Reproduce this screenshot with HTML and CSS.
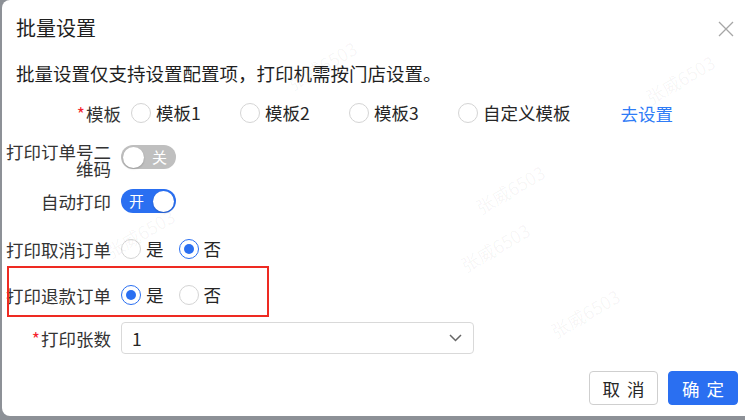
FILE: index.html
```html
<!DOCTYPE html>
<html lang="zh-CN">
<head>
    <meta charset="UTF-8">
    <meta name="viewport" content="width=device-width, initial-scale=1.0">
    <title>批量设置</title>
    <link rel="stylesheet" href="styles.css">
</head>
<body>
    <div class="dialog">
        <div class="dialog-header">
            <span class="dialog-title">批量设置</span>
            <span class="dialog-close">
                <svg width="16" height="16" viewBox="0 0 16 16"><path d="M1 1 L15 15 M15 1 L1 15" stroke="#a6a6a6" stroke-width="1.3" fill="none"/></svg>
            </span>
        </div>
        <p class="dialog-tip">批量设置仅支持设置配置项，打印机需按门店设置。</p>

        <form class="form">
            <div class="form-row row-template">
                <label class="form-label form-label-wide"><span class="required">*</span>模板</label>
                <div class="form-control">
                    <label class="radio tpl-option"><span class="radio-dot"></span>模板1</label>
                    <label class="radio tpl-option"><span class="radio-dot"></span>模板2</label>
                    <label class="radio tpl-option"><span class="radio-dot"></span>模板3</label>
                    <label class="radio"><span class="radio-dot"></span>自定义模板</label>
                    <a class="link" href="#">去设置</a>
                </div>
            </div>
            <div class="form-row row-qrcode">
                <label class="form-label">打印订单号二维码</label>
                <div class="form-control">
                    <span class="switch"><span class="switch-knob"></span><span class="switch-text">关</span></span>
                </div>
            </div>
            <div class="form-row row-auto">
                <label class="form-label">自动打印</label>
                <div class="form-control">
                    <span class="switch switch-on"><span class="switch-text">开</span><span class="switch-knob"></span></span>
                </div>
            </div>
            <div class="form-row row-cancel">
                <label class="form-label">打印取消订单</label>
                <div class="form-control">
                    <label class="radio yn-option"><span class="radio-dot"></span>是</label>
                    <label class="radio yn-option"><span class="radio-dot checked"></span>否</label>
                </div>
            </div>
            <div class="form-row row-refund">
                <label class="form-label">打印退款订单</label>
                <div class="form-control">
                    <label class="radio yn-option"><span class="radio-dot checked"></span>是</label>
                    <label class="radio yn-option"><span class="radio-dot"></span>否</label>
                </div>
            </div>
            <div class="form-row row-copies">
                <label class="form-label"><span class="required">*</span>打印张数</label>
                <div class="form-control">
                    <div class="select">
                        <span>1</span>
                        <svg width="13" height="8" viewBox="0 0 13 8"><path d="M1 1 L6.5 6.5 L12 1" stroke="#666" stroke-width="1.5" fill="none"/></svg>
                    </div>
                </div>
            </div>
        </form>

        <div class="dialog-footer">
            <button type="button" class="btn">取消</button>
            <button type="button" class="btn btn-primary">确定</button>
        </div>

        <div class="highlight-box"></div>

        <span class="watermark wm-1">张威6503</span>
        <span class="watermark wm-2">张威6503</span>
        <span class="watermark wm-3">张威6503</span>
        <span class="watermark wm-4">张威6503</span>
        <span class="watermark wm-5">张威6503</span>
        <span class="watermark wm-6">张威6503</span>
    </div>
</body>
</html>
```

FILE: styles.css
```css
body {
    margin: 0;
    padding: 0;
    background-color: #8d9197;
    font-family: "Noto Sans CJK SC", "Noto Sans", sans-serif;
    color: #262626;
    overflow: hidden;
}
.dialog {
    position: relative;
    margin-left: 2px;
    height: 416px;
    background-color: #fff;
    border-radius: 8px 0 0 8px;
    overflow: hidden;
}
.dialog-header {
    display: flex;
    justify-content: space-between;
    align-items: center;
    padding: 14px 11px 0 14px;
}
.dialog-title {
    font-size: 20px;
    line-height: 28px;
    color: #1f1f1f;
}
.dialog-close {
    display: flex;
    margin-top: 1px;
}
.dialog-tip {
    margin: 19px 0 0 14px;
    font-size: 18.5px;
    line-height: 24px;
    color: #1f1f1f;
}
.form {
    margin-top: 12px;
    padding-left: 4px;
}
.form-row {
    display: flex;
    align-items: center;
    height: 32px;
    font-size: 17.5px;
}
.row-qrcode {
    align-items: flex-start;
    height: 34px;
    margin-top: 14px;
}
.row-auto { margin-top: 8px; }
.row-cancel { margin-top: 16px; }
.row-refund { margin-top: 14px; }
.row-copies { margin-top: 11px; }

.form-label {
    width: 105px;
    flex-shrink: 0;
    text-align: right;
    line-height: 17px;
    color: #333;
}
.form-label-wide {
    width: 115px;
}
.required {
    color: #f5222d;
    margin-right: 1px;
}
.form-control {
    display: flex;
    align-items: center;
    margin-left: 10px;
}
.row-qrcode .form-control {
    margin-top: 2px;
}
.radio {
    display: flex;
    align-items: center;
    color: #262626;
    line-height: 24px;
}
.radio-dot {
    width: 20px;
    height: 20px;
    box-sizing: border-box;
    border: 1px solid #d4d4d4;
    border-radius: 50%;
    margin-right: 5px;
    position: relative;
}
.radio-dot.checked {
    border-color: #2a6ff1;
}
.radio-dot.checked::after {
    content: "";
    position: absolute;
    left: 4px;
    top: 4px;
    width: 10px;
    height: 10px;
    border-radius: 50%;
    background-color: #2a6ff1;
}
.tpl-option {
    width: 109px;
}
.yn-option {
    margin-right: 15px;
}
.link {
    margin-left: 50px;
    color: #2f7cf6;
    text-decoration: none;
}
.switch {
    display: flex;
    align-items: center;
    justify-content: space-between;
    width: 55px;
    height: 24px;
    box-sizing: border-box;
    padding: 0 9px 0 2px;
    border-radius: 12px;
    background-color: #bfbfbf;
}
.switch-on {
    background-color: #2a6ff1;
    padding: 0 2px 0 8px;
}
.switch-knob {
    width: 21px;
    height: 21px;
    border-radius: 50%;
    background-color: #fff;
    box-shadow: 0 1px 2px rgba(0,0,0,0.2);
}
.switch-text {
    color: #fff;
    font-size: 15px;
    line-height: 24px;
}
.select {
    display: flex;
    align-items: center;
    justify-content: space-between;
    width: 353px;
    height: 32px;
    box-sizing: border-box;
    padding: 0 11px 0 10px;
    border: 1px solid #d9d9d9;
    border-radius: 4px;
    color: #262626;
}
.dialog-footer {
    display: flex;
    justify-content: flex-end;
    gap: 10px;
    margin-top: 17px;
    padding-right: 7px;
}
.btn {
    width: 69px;
    height: 34px;
    padding: 0 0 0 7px;
    border: 1px solid #cfcfcf;
    border-radius: 4px;
    background-color: #fff;
    color: #262626;
    font-family: inherit;
    font-size: 17.5px;
    letter-spacing: 7px;
}
.btn-primary {
    width: 70px;
    border-color: #2a6ff1;
    background-color: #2a6ff1;
    color: #fff;
}
.highlight-box {
    position: absolute;
    left: 5px;
    top: 266px;
    width: 262px;
    height: 51px;
    box-sizing: border-box;
    border: 2px solid #ee2a22;
}
.watermark {
    position: absolute;
    font-size: 18px;
    color: rgba(0,0,0,0.045);
    transform: rotate(-30deg);
    pointer-events: none;
    white-space: nowrap;
}
.wm-1 { left: 282px; top: 52px; }
.wm-2 { left: 640px; top: 66px; }
.wm-3 { left: 455px; top: 234px; }
.wm-4 { left: 100px; top: 220px; }
.wm-5 { left: 545px; top: 300px; }
.wm-6 { left: 470px; top: 176px; }
```
